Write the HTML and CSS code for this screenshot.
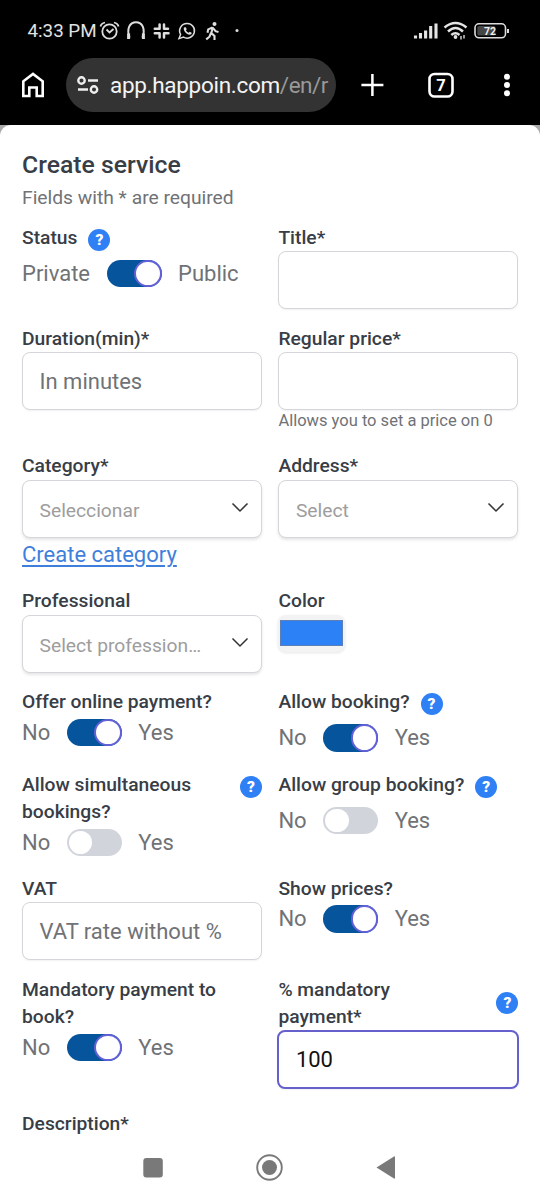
FILE: index.html
```html
<!DOCTYPE html>
<html lang="en">
<head>
<meta charset="utf-8">
<title>Create service</title>
<link rel="stylesheet" href="styles.css">
</head>
<body>
<header class="top">
  <div class="status">
    <span class="clock">4:33 PM</span>
    <svg class="status-icons" width="145" height="24" viewBox="0 0 145 24" fill="none" stroke="#dedede" stroke-width="1.8">
      <circle cx="12.5" cy="12.5" r="7.2"/><path d="M9.5 10.5l3 3 4-3.5M3.500 7.500Q4 4.500 8 3.500M21.500 7.500Q21 4.500 17 3.500"/>
      <path d="M32.500 18.500C29.500 10 32.500 3.200 39 3.200s9.500 6.800 6.500 15.300" stroke-width="2"/><path d="M31.600 14.500V20M46.400 14.500V20" stroke-width="3"/>
      <path d="M90 4.500a7.300 7.300 0 1 1-3.500 13.600L82 19.600l1.600-4.200A7.300 7.300 0 0 1 90 4.500z" stroke-width="1.500"/>
      <path d="M86.900 8.500c-1 3.500 3.500 8 6.700 7 1-.4 1.400-1.500 1-1.800l-1.800-1-1.200 1c-1.300-.5-2-1.300-2.700-2.500l.8-1-.8-2z" fill="#dedede" stroke="none"/>
      <g stroke-width="2.500" stroke-linecap="round" transform="translate(-.7 -.3)"><path d="M63.300 5.700v4.400M58.500 10.100h4.800M67.700 5.700v4.400M67.700 10.100h4M58.500 14.500h4.800M63.300 14.500v4.400M67.700 14.500h4.500M67.700 14.500v4.400"/></g>
      <circle cx="117.500" cy="5" r="2" fill="#dedede" stroke="none"/><path d="M116 8l-1.700 6 3.200 3v4M114 14l-1.500 3.700-3.300 2.700M115.500 8.500l-4.300 1.900-.7 3.300M116.500 9.500l2 2.700 3 .8" stroke-width="2.100"/>
      <circle cx="140" cy="11.500" r="1.500" fill="#dedede" stroke="none"/>
    </svg>
    <svg class="signal" width="100" height="24" viewBox="0 0 100 24" fill="none">
      <path d="M5.500 19.500v-3M10.500 19.500v-5.500M15.600 19.500v-8M20.700 19.500V7M26 19.500V4.500" stroke="#e4e4e4" stroke-width="3.100"/>
      <g stroke="#e4e4e4" stroke-width="2.500"><path d="M34.500 8.500Q45.500-.5 56.500 8.500M38 12.500Q45.500 5.500 53 12.500M41.300 16Q45.500 12.500 49.500 16"/></g><circle cx="45.500" cy="18" r="1.900" fill="#e4e4e4"/><path d="M51 17v3.500M54 16v3.500" stroke="#ccc" stroke-width="1.500"/>
      <rect x="65" y="4.800" width="30.500" height="14" rx="4" stroke="#ddd" stroke-width="1.600"/><rect x="67.300" y="7" width="18" height="9.600" rx="1.500" fill="#454545"/><path d="M98 10v4" stroke="#ddd" stroke-width="2"/>
      <text x="80" y="15.700" text-anchor="middle" class="battery">72</text>
    </svg>
  </div>
  <div class="browser">
    <svg class="home" width="24" height="26" viewBox="0 0 24 26" fill="none" stroke="#fff" stroke-width="2.600"><path d="M2.300 24V9.300L12 2l9.700 7.300V24h-6v-8.500H8.300V24z"/></svg>
    <div class="address">
      <svg width="22" height="20" viewBox="0 0 22 20" fill="none" stroke="#eee" stroke-width="2.400"><circle cx="4.500" cy="5.500" r="3.200"/><path d="M11 5.500h10M1 14.500h10"/><circle cx="17" cy="14.500" r="3.200"/></svg>
      <span class="url">app.happoin.com<span>/en/r</span></span>
    </div>
    <svg class="actions" width="160" height="28" viewBox="0 0 160 28" fill="none" stroke="#fff">
      <path d="M5.400 14h22M16.400 3v22" stroke-width="2.500"/>
      <rect x="73.500" y="3" width="23" height="22.500" rx="5" stroke-width="2.600"/>
      <text x="85" y="19.700" text-anchor="middle" class="tabs">7</text>
      <g fill="#fff" stroke="none"><circle cx="151" cy="5.800" r="3"/><circle cx="151" cy="14" r="3"/><circle cx="151" cy="22.200" r="3"/></g>
    </svg>
  </div>
</header>
<div class="backdrop">
<main class="sheet">
  <h1>Create service</h1>
  <p class="lead">Fields with * are required</p>
  <form class="grid">
    <div>
      <div class="label help-row"><span>Status</span><i class="help">?</i></div>
      <div class="switch-row">Private<span class="switch on"></span>Public</div>
    </div>
    <div><label class="label">Title*</label><div class="field"></div></div>

    <div><label class="label">Duration(min)*</label><div class="field">In minutes</div></div>
    <div><label class="label">Regular price*</label><div class="field"></div><div class="hint">Allows you to set a price on 0</div></div>

    <div>
      <label class="label">Category*</label>
      <div class="field select">Seleccionar<svg width="18" height="12" viewBox="0 0 18 12"><path d="M1.500 1.500L9 9l7.500-7.500"/></svg></div>
      <a class="link">Create category</a>
    </div>
    <div>
      <label class="label">Address*</label>
      <div class="field select">Select<svg width="18" height="12" viewBox="0 0 18 12"><path d="M1.500 1.500L9 9l7.500-7.500"/></svg></div>
    </div>

    <div>
      <label class="label">Professional</label>
      <div class="field select">Select profession…<svg width="18" height="12" viewBox="0 0 18 12"><path d="M1.500 1.500L9 9l7.500-7.500"/></svg></div>
    </div>
    <div><label class="label">Color</label><div class="color"><div class="swatch"></div></div></div>

    <div>
      <div class="label">Offer online payment?</div>
      <div class="switch-row">No<span class="switch on"></span>Yes</div>
    </div>
    <div>
      <div class="label help-row"><span>Allow booking?</span><i class="help">?</i></div>
      <div class="switch-row">No<span class="switch on"></span>Yes</div>
    </div>

    <div>
      <div class="label help-row wide"><span>Allow simultaneous bookings?</span><i class="help">?</i></div>
      <div class="switch-row">No<span class="switch"></span>Yes</div>
    </div>
    <div>
      <div class="label help-row"><span>Allow group booking?</span><i class="help">?</i></div>
      <div class="switch-row">No<span class="switch"></span>Yes</div>
    </div>

    <div><label class="label">VAT</label><div class="field">VAT rate without %</div></div>
    <div>
      <div class="label">Show prices?</div>
      <div class="switch-row">No<span class="switch on"></span>Yes</div>
    </div>

    <div>
      <div class="label">Mandatory payment to book?</div>
      <div class="switch-row">No<span class="switch on"></span>Yes</div>
    </div>
    <div>
      <div class="label help-row wide centered"><span>% mandatory<br>payment*</span><i class="help">?</i></div>
      <div class="field focused">100</div>
    </div>

    <div><label class="label">Description*</label></div>
  </form>
  <nav class="system">
    <svg width="540" height="40" viewBox="0 0 540 40" fill="#797979"><rect x="143.300" y="10" width="19.500" height="19.500" rx="3"/><circle cx="269.500" cy="19.500" r="12.300" fill="none" stroke="#797979" stroke-width="1.900"/><circle cx="269.500" cy="19.500" r="7.500"/><path d="M376.500 19.500L394 8.500q1-.5 1 .8v20.400q0 1.300-1 .8z"/></svg>
  </nav>
</main>
</div>
</body>
</html>
```

FILE: styles.css
```css
*, *::before { box-sizing: border-box; }
body {
  margin: 0;
  width: 540px;
  height: 1200px;
  overflow: hidden;
  font-family: Roboto, sans-serif;
  font-size: 22px;
  color: #707276;
  background: #fff;
}
svg { display: block; flex: none; }

.top { height: 125px; background: #000; }
.status { display: flex; align-items: center; height: 58px; padding: 3px 30px 0 27.500px; color: #e2e2e2; }
.clock { width: 69.500px; font-size: 18.800px; white-space: nowrap; }
.signal { margin-left: auto; }
.battery { font: 700 10.500px Roboto, sans-serif; fill: #eee; }
.browser { display: flex; align-items: center; height: 54px; padding-left: 21px; }
.address {
  display: flex;
  align-items: center;
  width: 270px;
  height: 54px;
  margin-left: 21px;
  padding-left: 11px;
  gap: 11px;
  border-radius: 27px;
  background: #333;
}
.url { font-size: 22.500px; letter-spacing: -.3px; color: #f4f4f4; white-space: nowrap; }
.url span { color: #999; letter-spacing: -.5px; }
.actions { margin-left: 20px; }
.tabs { font: 700 16.500px Roboto, sans-serif; fill: #fff; stroke: none; }

.backdrop { height: 1075px; background: #aaa; }
.sheet {
  display: flex;
  flex-direction: column;
  height: 1075px;
  padding-top: 23.400px;
  border-radius: 11px 11px 0 0;
  background: #fff;
}
h1 { margin: 0; padding-left: 22px; font-size: 24.750px; line-height: 33px; font-weight: 500; color: #383d46; }
.lead { margin: 3px 0 0; padding-left: 22px; font-size: 19.250px; line-height: 27.500px; }
.grid {
  display: grid;
  grid-template-columns: 240px 240px;
  grid-template-rows: 101px 127.200px 135px 101.300px 82.500px 104px 101.100px 133.900px 28px;
  column-gap: 16.400px;
  padding: 12px 22px 0;
}
.label { font-size: 19.250px; line-height: 27.500px; font-weight: 500; color: #383d46; }
.help-row { display: flex; align-items: flex-start; gap: 11px; min-height: 33px; }
.wide { justify-content: space-between; }
.wide span { max-width: 200px; }
.help {
  flex: none;
  width: 22px;
  height: 22px;
  margin-top: 5px;
  border-radius: 50%;
  background: #2f80f5;
  color: #fff;
  font: 900 15.500px/22px Roboto, sans-serif;
  text-align: center;
}
.centered { align-items: center; }
.centered .help { margin-top: 0; }
.switch-row { display: flex; align-items: center; gap: 16.500px; height: 33px; }
.switch { display: flex; width: 55px; height: 27.500px; padding: 2px; border-radius: 14px; background: #d1d5db; }
.switch::before { content: ""; width: 23.500px; height: 23.500px; border-radius: 50%; background: #fff; }
.switch.on { justify-content: flex-end; padding: 0; background: #05549c; }
.switch.on::before { width: 27.500px; height: 27.500px; border: 2px solid #6460d7; }
.field {
  display: flex;
  align-items: center;
  height: 57.750px;
  padding: 0 16.500px;
  border: 1px solid #d4d6da;
  border-radius: 8px;
  background: #fff;
  box-shadow: 0 1px 2px rgba(0, 0, 0, .06);
}
.select { height: 58px; justify-content: space-between; padding: 3px 12px 0 16.500px; font-size: 19.250px; color: #9d9d9d; box-shadow: 0 2px 3px rgba(0, 0, 0, .1); }
.select svg { margin-top: -4px; fill: none; stroke: #333; stroke-width: 1.500; }
.focused { width: 242px; height: 59px; margin: -.500px -1px 0; border: 2px solid #6560cc; color: #111; }
.hint { font-size: 16.500px; line-height: 22px; }
.link { display: block; line-height: 33px; color: #3f7fdc; text-decoration: underline; text-underline-offset: 3px; text-decoration-thickness: 1.500px; }
.color { width: 67px; height: 37px; padding: 5px 2px 6px; border-radius: 8px; background: #f3f3f3; box-shadow: 0 1px 3px rgba(0, 0, 0, .1); }
.swatch { height: 26px; border: 1px solid #5c7fb8; background: #2c81f7; }
.system { margin-top: auto; height: 52px; }
```
